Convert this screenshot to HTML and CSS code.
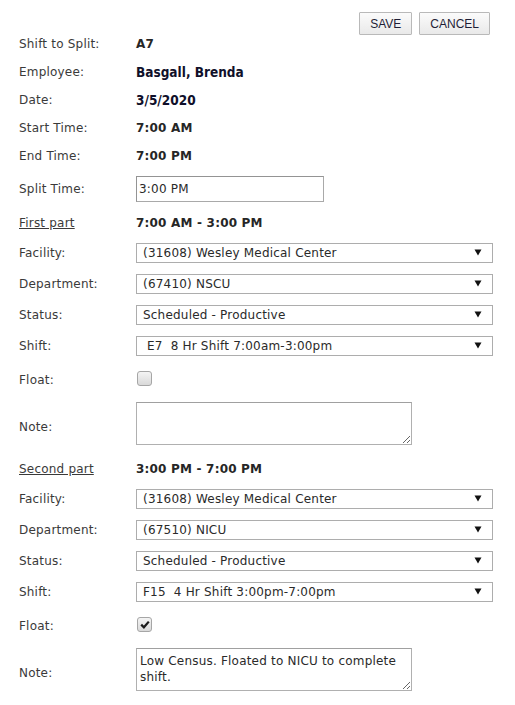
FILE: index.html
```html
<!DOCTYPE html>
<html>
<head>
<meta charset="utf-8">
<title>Split Shift</title>
<link rel="stylesheet" href="styles.css">
</head>
<body>
<div class="page">
  <div class="toolbar">
    <button class="btn" type="button">SAVE</button>
    <button class="btn" type="button">CANCEL</button>
  </div>
  <div class="form">
    <div class="row row-text"><span class="label">Shift to Split:</span><span class="value">A7</span></div>
    <div class="row row-text"><span class="label">Employee:</span><span class="value value-big">Basgall, Brenda</span></div>
    <div class="row row-text"><span class="label">Date:</span><span class="value value-big">3/5/2020</span></div>
    <div class="row row-text"><span class="label">Start Time:</span><span class="value">7:00 AM</span></div>
    <div class="row row-text"><span class="label">End Time:</span><span class="value">7:00 PM</span></div>
    <div class="row row-input"><span class="label">Split Time:</span><input class="textbox" type="text" value="3:00 PM"></div>

    <div class="row row-head"><a class="label link" href="#">First part</a><span class="value">7:00 AM - 3:00 PM</span></div>
    <div class="row row-select"><span class="label">Facility:</span>
      <div class="select"><select><option>(31608) Wesley Medical Center</option></select>
        <svg class="arrow" width="8" height="7" viewBox="0 0 8 7"><polygon points="0.5,0.5 7.5,0.5 4,6.5" fill="#111"/></svg></div></div>
    <div class="row row-select"><span class="label">Department:</span>
      <div class="select"><select><option>(67410) NSCU</option></select>
        <svg class="arrow" width="8" height="7" viewBox="0 0 8 7"><polygon points="0.5,0.5 7.5,0.5 4,6.5" fill="#111"/></svg></div></div>
    <div class="row row-select"><span class="label">Status:</span>
      <div class="select"><select><option>Scheduled - Productive</option></select>
        <svg class="arrow" width="8" height="7" viewBox="0 0 8 7"><polygon points="0.5,0.5 7.5,0.5 4,6.5" fill="#111"/></svg></div></div>
    <div class="row row-select"><span class="label">Shift:</span>
      <div class="select"><select class="indent"><option>E7&nbsp; 8 Hr Shift 7:00am-3:00pm</option></select>
        <svg class="arrow" width="8" height="7" viewBox="0 0 8 7"><polygon points="0.5,0.5 7.5,0.5 4,6.5" fill="#111"/></svg></div></div>
    <div class="row row-check"><span class="label">Float:</span><span class="check"></span></div>
    <div class="row row-note"><span class="label note-label">Note:</span><textarea class="note"></textarea></div>

    <div class="row row-head"><a class="label link" href="#">Second part</a><span class="value">3:00 PM - 7:00 PM</span></div>
    <div class="row row-select"><span class="label">Facility:</span>
      <div class="select"><select><option>(31608) Wesley Medical Center</option></select>
        <svg class="arrow" width="8" height="7" viewBox="0 0 8 7"><polygon points="0.5,0.5 7.5,0.5 4,6.5" fill="#111"/></svg></div></div>
    <div class="row row-select"><span class="label">Department:</span>
      <div class="select"><select><option>(67510) NICU</option></select>
        <svg class="arrow" width="8" height="7" viewBox="0 0 8 7"><polygon points="0.5,0.5 7.5,0.5 4,6.5" fill="#111"/></svg></div></div>
    <div class="row row-select"><span class="label">Status:</span>
      <div class="select"><select><option>Scheduled - Productive</option></select>
        <svg class="arrow" width="8" height="7" viewBox="0 0 8 7"><polygon points="0.5,0.5 7.5,0.5 4,6.5" fill="#111"/></svg></div></div>
    <div class="row row-select"><span class="label">Shift:</span>
      <div class="select"><select><option>F15&nbsp; 4 Hr Shift 3:00pm-7:00pm</option></select>
        <svg class="arrow" width="8" height="7" viewBox="0 0 8 7"><polygon points="0.5,0.5 7.5,0.5 4,6.5" fill="#111"/></svg></div></div>
    <div class="row row-check"><span class="label">Float:</span><span class="check checked"><svg width="10" height="9" viewBox="0 0 10 9"><path d="M1.2 4.6 L3.9 7.3 L8.8 1.6" fill="none" stroke="#1a1a1a" stroke-width="2.2"/></svg></span></div>
    <div class="row row-note"><span class="label note-label">Note:</span><textarea class="note">Low Census. Floated to NICU to complete shift.</textarea></div>
  </div>
</div>
</body>
</html>
```
FILE: styles.css
```css
* { box-sizing: border-box; }
html, body { margin: 0; padding: 0; background: #fff; }
body {
  font-family: "DejaVu Sans", Verdana, sans-serif;
  font-size: 12px;
  letter-spacing: 0.2px;
  color: #3a3a3a;
}
.page {
  width: 515px;
  padding: 0 22px 0 19px;
}
.toolbar {
  display: flex;
  justify-content: flex-end;
  align-items: flex-start;
  gap: 7px;
  height: 30px;
  padding: 12px 3px 0 0;
}
.btn {
  flex: none;
  height: 23px;
  padding: 0 10px;
  border: 1px solid #b9b9b9;
  border-radius: 1px;
  background: linear-gradient(#fbfbfb, #e9e9e9);
  font-family: "Liberation Sans", Arial, sans-serif;
  font-size: 12px;
  letter-spacing: 0;
  color: #1e1e36;
  position: relative;
  z-index: 1;
}
.form { display: flex; flex-direction: column; }
.row { display: flex; align-items: center; }
.row-text { height: 28px; }
.row-input { height: 38px; }
.row-head { height: 29px; }
.row-select { height: 31px; }
.row-check { height: 38px; }
.row-note { height: 55px; padding: 3px 0 9px; }
.label {
  flex: none;
  width: 117px;
  color: #3a3a3a;
}
.note-label { padding-top: 6px; }
.link { color: #3a3a3a; text-decoration: underline; }
.value { font-weight: bold; color: #262626; }
.value-big {
  font-family: "DejaVu Sans Condensed", "DejaVu Sans", sans-serif;
  font-size: 13.5px;
  letter-spacing: 0;
  color: #10102a;
}
.textbox {
  width: 188px;
  height: 26px;
  margin: 0;
  padding: 0 2px;
  border: 1px solid #a9a9a9;
  border-top-color: #949494;
  border-left-color: #949494;
  font-family: "DejaVu Sans", Verdana, sans-serif;
  font-size: 12px;
  letter-spacing: 0.2px;
  color: #2a2a2a;
  outline: none;
}
.select {
  position: relative;
  width: 357px;
  height: 20px;
}
.select select {
  -webkit-appearance: none;
  appearance: none;
  width: 100%;
  height: 20px;
  margin: 0;
  padding: 0 24px 0 6px;
  border: 1px solid #adadad;
  border-radius: 0;
  background: #fff;
  font-family: "DejaVu Sans", Verdana, sans-serif;
  font-size: 12px;
  letter-spacing: 0.2px;
  color: #2a2a2a;
  outline: none;
}
.select select.indent { padding-left: 10px; }
.arrow {
  position: absolute;
  right: 11px;
  top: 6px;
  pointer-events: none;
}
.check {
  display: flex;
  align-items: center;
  justify-content: center;
  width: 15px;
  height: 15px;
  margin-left: 1px;
  margin-top: -3px;
  border: 1px solid #a6a6a6;
  border-radius: 3px;
  background: linear-gradient(#f4f4f4, #d9d9d9);
}
.note {
  display: block;
  width: 276px;
  height: 43px;
  margin: 0;
  padding: 4px 3px;
  border: 1px solid #b0b0b0;
  border-top-color: #a0a0a0;
  font-family: "DejaVu Sans", Verdana, sans-serif;
  font-size: 12px;
  letter-spacing: 0.2px;
  line-height: 16px;
  color: #2a2a2a;
  resize: both;
  overflow: hidden;
}
```
